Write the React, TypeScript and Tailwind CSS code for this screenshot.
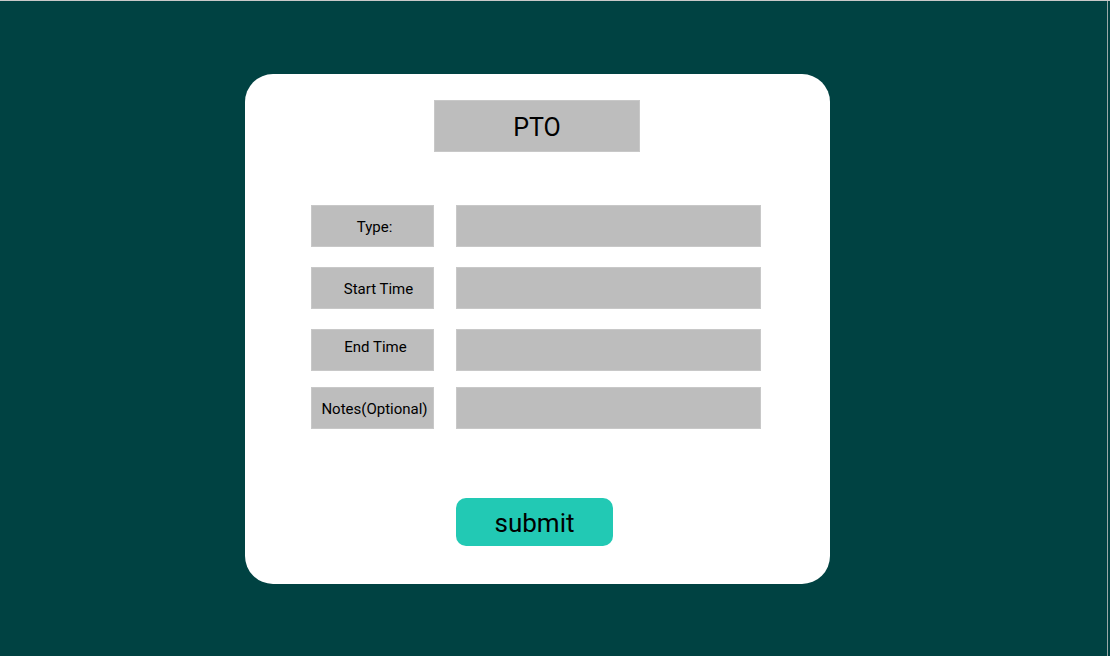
const rows = [
  { label: 'Type:', mt: 'mt-[53px]', textCls: 'pl-[4px] pt-[2px]' },
  { label: 'Start Time', mt: 'mt-[20px]', textCls: 'pl-[12px] pt-[2px]' },
  { label: 'End Time', mt: 'mt-[20px]', textCls: 'pl-[6px] pb-[6px]' },
  { label: 'Notes(Optional)', mt: 'mt-[16px]', textCls: 'pl-[4px] pt-[2px]' },
];

export default function App() {
  return (
    <div
      className="w-full h-[656px] bg-[#004242] border-t border-[#c9c9c9] overflow-hidden"
      style={{ fontFamily: 'Roboto, "Noto Sans", sans-serif' }}
    >
      <div className="w-[1108px] h-full border-r border-[#9aa8a8] pt-[73px]">
        <div className="ml-[245px] w-[585px] h-[510px] bg-white rounded-[28px] flex flex-col pt-[26px]">
          <div className="ml-[189px] w-[206px] h-[52px] bg-[#bdbdbd] border border-[#c8c8c8] flex items-center justify-center pt-[3px] text-[25px] text-black">
            PTO
          </div>

          {rows.map((r) => (
            <div key={r.label} className={`flex gap-[22px] pl-[66px] ${r.mt}`}>
              <div
                className={`w-[123px] h-[42px] bg-[#bdbdbd] border border-[#c8c8c8] flex items-center justify-center text-[15px] text-black whitespace-nowrap ${r.textCls}`}
              >
                {r.label}
              </div>
              <div className="w-[305px] h-[42px] bg-[#bdbdbd] border border-[#c8c8c8]" />
            </div>
          ))}

          <div className="pl-[211px] mt-[69px]">
            <button className="w-[157px] h-[48px] rounded-[10px] bg-[#22c9b4] pt-[2px] text-[26px] text-black flex items-center justify-center">
              submit
            </button>
          </div>
        </div>
      </div>
    </div>
  );
}
